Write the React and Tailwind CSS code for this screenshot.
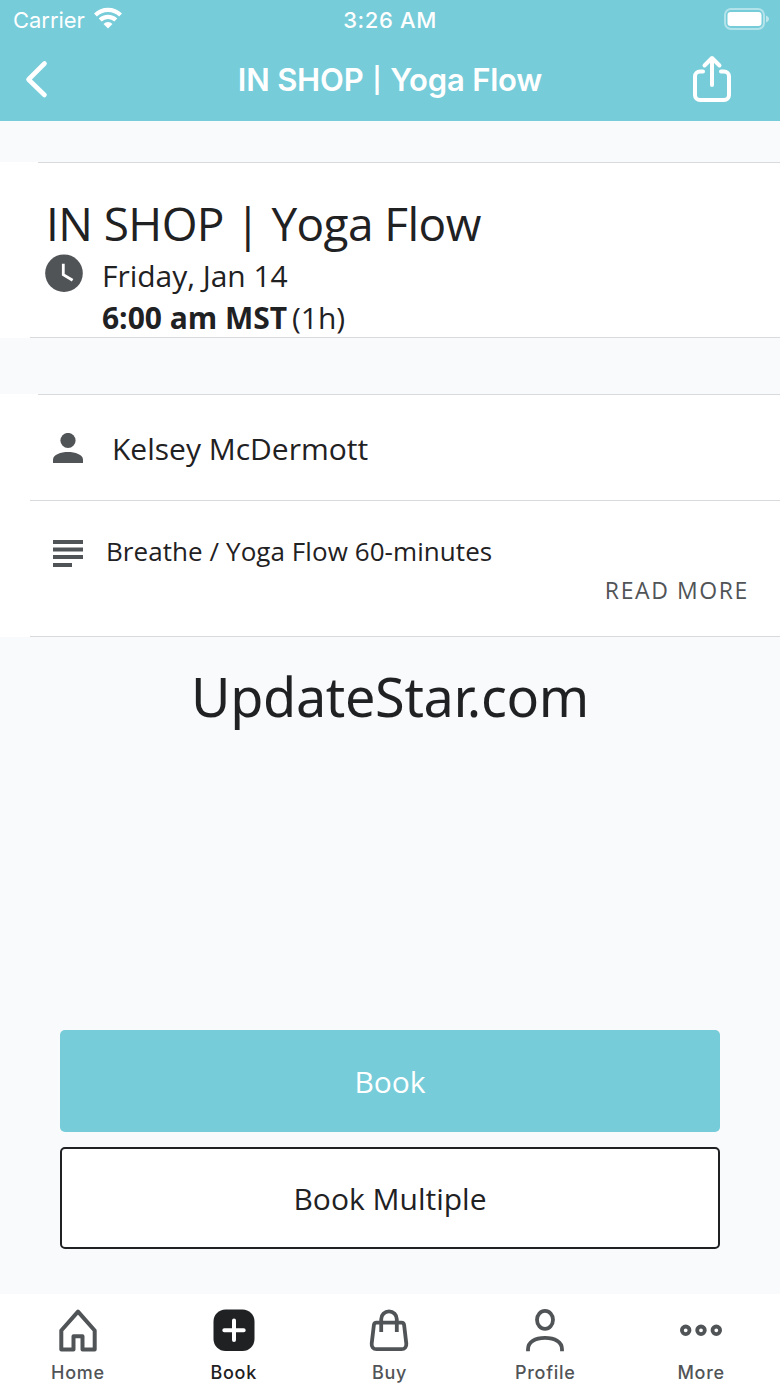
const TABS = [
  { label: 'Home', icon: HomeIcon },
  { label: 'Book', icon: BookIcon, active: true },
  { label: 'Buy', icon: BagIcon },
  { label: 'Profile', icon: ProfileIcon },
  { label: 'More', icon: MoreIcon },
];

function HomeIcon() {
  return (
    <svg className="w-[42px] h-[44px]" viewBox="0 0 42 44" fill="none" stroke="currentColor" strokeWidth="4" strokeLinejoin="round">
      <path d="M21 3.6L37.7 22.5v18.9H25.5V28.3h-9v13.1H4.300V22.5L21 3.6z" />
    </svg>
  );
}

function BookIcon() {
  return (
    <svg className="w-[42px] h-[44px]" viewBox="0 0 42 44" fill="none">
      <rect x="0.5" y="1.5" width="41" height="41.5" rx="12" fill="currentColor" />
      <path d="M21 12.5V32M11.3 22.2h19.4" stroke="#fff" strokeWidth="4" strokeLinecap="round" />
    </svg>
  );
}

function BagIcon() {
  return (
    <svg className="w-[42px] h-[44px]" viewBox="0 0 42 44" fill="none" stroke="currentColor" strokeWidth="3.8" strokeLinejoin="round">
      <path d="M8.5 14.7h25c1.6 0 2.4.8 2.6 2.2l2.2 18.6c.4 3.4-1.6 5.7-4.8 5.7h-25c-3.200 0-5.200-2.300-4.800-5.700l2.200-18.600c.2-1.400 1-2.200 2.600-2.200z" />
      <path d="M13.2 24V11.2a7.8 7.8 0 0 1 15.600 0V24" />
    </svg>
  );
}

function ProfileIcon() {
  return (
    <svg className="w-[42px] h-[44px]" viewBox="0 0 42 44" fill="none" stroke="currentColor" strokeWidth="3.8">
      <ellipse cx="21" cy="11.8" rx="8" ry="9" />
      <path d="M4 43.200v-2C4 34 11 29.800 21 29.800s17 4.200 17 11.400v2" />
    </svg>
  );
}

function MoreIcon() {
  return (
    <svg className="w-[42px] h-[44px]" viewBox="0 0 42 44" fill="none" stroke="currentColor" strokeWidth="3.8">
      <circle cx="5.7" cy="22.3" r="3.8" />
      <circle cx="21" cy="22.3" r="3.8" />
      <circle cx="36.3" cy="22.3" r="3.8" />
    </svg>
  );
}

function StatusBar() {
  return (
    <div className="grid grid-cols-3 items-center h-[40px] pl-[13px] pr-[11px] text-[22px] leading-none">
      <div className="flex items-center gap-[9px]">
        <span className="tracking-[-0.05px]">Carrier</span>
        <svg className="w-[28px] h-[22px] -mt-[4px]" viewBox="0 0 28 22" fill="none" stroke="#fff" strokeWidth="4.2">
          <path d="M1.4 8a18 18 0 0 1 25.2 0" />
          <path d="M6.2 13.100a11.200 11.200 0 0 1 15.600 0" />
          <path d="M14 21.500l-4.500-4.600a6.500 6.500 0 0 1 9 0z" fill="#fff" stroke="none" />
        </svg>
      </div>
      <div className="-ml-[2px] text-center font-medium tracking-[0.6px]">3:26 AM</div>
      <div className="flex justify-end">
        <svg className="w-[46px] h-[22px] -mt-[2px]" viewBox="0 0 46 22" fill="none">
          <rect x="2" y="1" width="39" height="20" rx="6" stroke="#fff" strokeOpacity="0.45" strokeWidth="2" />
          <rect x="4.5" y="4" width="34" height="14" rx="3" fill="#fff" />
          <path d="M43 7.500c2 .8 3 2 3 3.500s-1 2.700-3 3.500z" fill="#fff" fillOpacity="0.5" />
        </svg>
      </div>
    </div>
  );
}

function Header() {
  return (
    <header className="h-[121px] bg-[#76ccd9] text-white font-['Inter',sans-serif]">
      <StatusBar />
      <div className="flex items-center justify-between h-[78px] pl-[24px] pr-[48px]">
        <button className="w-[40px]">
          <svg className="w-[26px] h-[40px]" viewBox="0 0 26 40" fill="none" stroke="currentColor" strokeWidth="4.6" strokeLinecap="round" strokeLinejoin="round">
            <path d="M20.5 4.500L4.500 20.500l16 15.500" />
          </svg>
        </button>
        <h1 className="flex items-center gap-[9px] ml-[24px] text-[31px] font-semibold leading-none tracking-[-0.2px]">
          <span>IN SHOP</span>
          <span className="mt-[2px] text-[25px]">|</span>
          <span>Yoga Flow</span>
        </h1>
        <button className="-mt-[2px]">
          <svg className="w-[40px] h-[48px]" viewBox="0 0 40 48" fill="none" stroke="currentColor" strokeWidth="4" strokeLinecap="round" strokeLinejoin="round">
            <path d="M11 17.500H8a5 5 0 0 0-5 5V41a5 5 0 0 0 5 5h24a5 5 0 0 0 5-5V22.500a5 5 0 0 0-5-5h-3" />
            <path d="M20 31V4M12.500 11.500L20 4l7.500 7.500" />
          </svg>
        </button>
      </div>
    </header>
  );
}

function ClassSummary() {
  return (
    <section className="h-[176px] bg-white">
      <div className="ml-[38px] h-px bg-[#d8dadb]"></div>
      <div className="h-[174px] pl-[45px] pt-[27px]">
        <h2 className="ml-[1px] text-[46px] leading-[66px] tracking-[-0.58px] whitespace-nowrap">IN SHOP | Yoga Flow</h2>
        <div className="flex gap-[19px] -mt-[2px]">
          <svg className="w-[38px] h-[38px]" viewBox="0 0 38 38">
            <circle cx="19" cy="19.200" r="18.800" fill="#515457" />
            <path d="M18.300 9.700v11l9.300 5.600" fill="none" stroke="#fff" strokeWidth="2.800" />
          </svg>
          <div className="mt-[1px] text-[30px] leading-[42px] tracking-[-0.03px]">
            <p>Friday, Jan 14</p>
            <p className="flex gap-[5px]">
              <span className="font-bold">6:00 am MST</span>
              <span>(1h)</span>
            </p>
          </div>
        </div>
      </div>
      <div className="ml-[30px] h-px bg-[#d8dadb]"></div>
    </section>
  );
}

function ClassDetails() {
  return (
    <section className="mt-[56px] bg-white">
      <div className="ml-[38px] h-px bg-[#d8dadb]"></div>
      <div className="flex items-center h-[105px] pl-[53px] gap-[29px]">
        <svg className="w-[30px] h-[30px]" viewBox="0 0 30 30" fill="#515457">
          <circle cx="15" cy="7.5" r="7.6" />
          <path d="M0 30v-3.500C0 21.500 8 19 15 19s15 2.500 15 7.500V30z" />
        </svg>
        <span className="mt-[2px] text-[30px] leading-[42px]">Kelsey McDermott</span>
      </div>
      <div className="ml-[30px] h-px bg-[#d8dadb]"></div>
      <div className="flex flex-col h-[135px] pt-[32px] pl-[53px] pr-[31px]">
        <div className="flex items-center gap-[23px]">
          <svg className="mt-[5px] w-[30px] h-[27px]" viewBox="0 0 30 27" fill="#515457">
            <path d="M0 0h30v4H0zM0 7.500h30v4H0zM0 15h30v4H0zM0 23h19v4H0z" />
          </svg>
          <span className="text-[26px] leading-[36px] tracking-[0.07px]">Breathe / Yoga Flow 60-minutes</span>
        </div>
        <button className="self-end mt-[6px] text-[23px] leading-[30px] tracking-[1.6px] text-[#515457]">READ MORE</button>
      </div>
      <div className="ml-[30px] h-px bg-[#d8dadb]"></div>
    </section>
  );
}

function TabBar() {
  return (
    <nav className="grid grid-cols-5 h-[93px] pr-[1px] bg-white font-['Inter',sans-serif]">
      {TABS.map(({ label, icon: Icon, active }) => (
        <button
          key={label}
          className={`flex flex-col items-center pt-[14px] ${active ? 'text-[#1f2123]' : 'text-[#515457]'}`}
        >
          <Icon />
          <span className="mt-[9px] text-[18px] leading-[24px] font-medium tracking-[0.7px]">{label}</span>
        </button>
      ))}
    </nav>
  );
}

export default function App() {
  return (
    <div className="flex flex-col w-[780px] h-[1387px] overflow-hidden bg-[#f8fafc] text-[#1f2123] font-['Open_Sans',sans-serif]">
      <Header />
      <main className="flex flex-col flex-1 pt-[41px]">
        <ClassSummary />
        <ClassDetails />
        <p className="mt-[21px] text-center text-[54px] leading-[76px] tracking-[-0.35px] font-['Noto_Sans',sans-serif]">UpdateStar.com</p>
        <div className="flex flex-col gap-[15px] mt-auto px-[60px] pb-[45px] text-[30px]">
          <button className="h-[102px] rounded-[5px] bg-[#76ccd9] text-white">Book</button>
          <button className="h-[102px] rounded-[5px] border-2 border-[#1f2123] bg-white">Book Multiple</button>
        </div>
      </main>
      <TabBar />
    </div>
  );
}
